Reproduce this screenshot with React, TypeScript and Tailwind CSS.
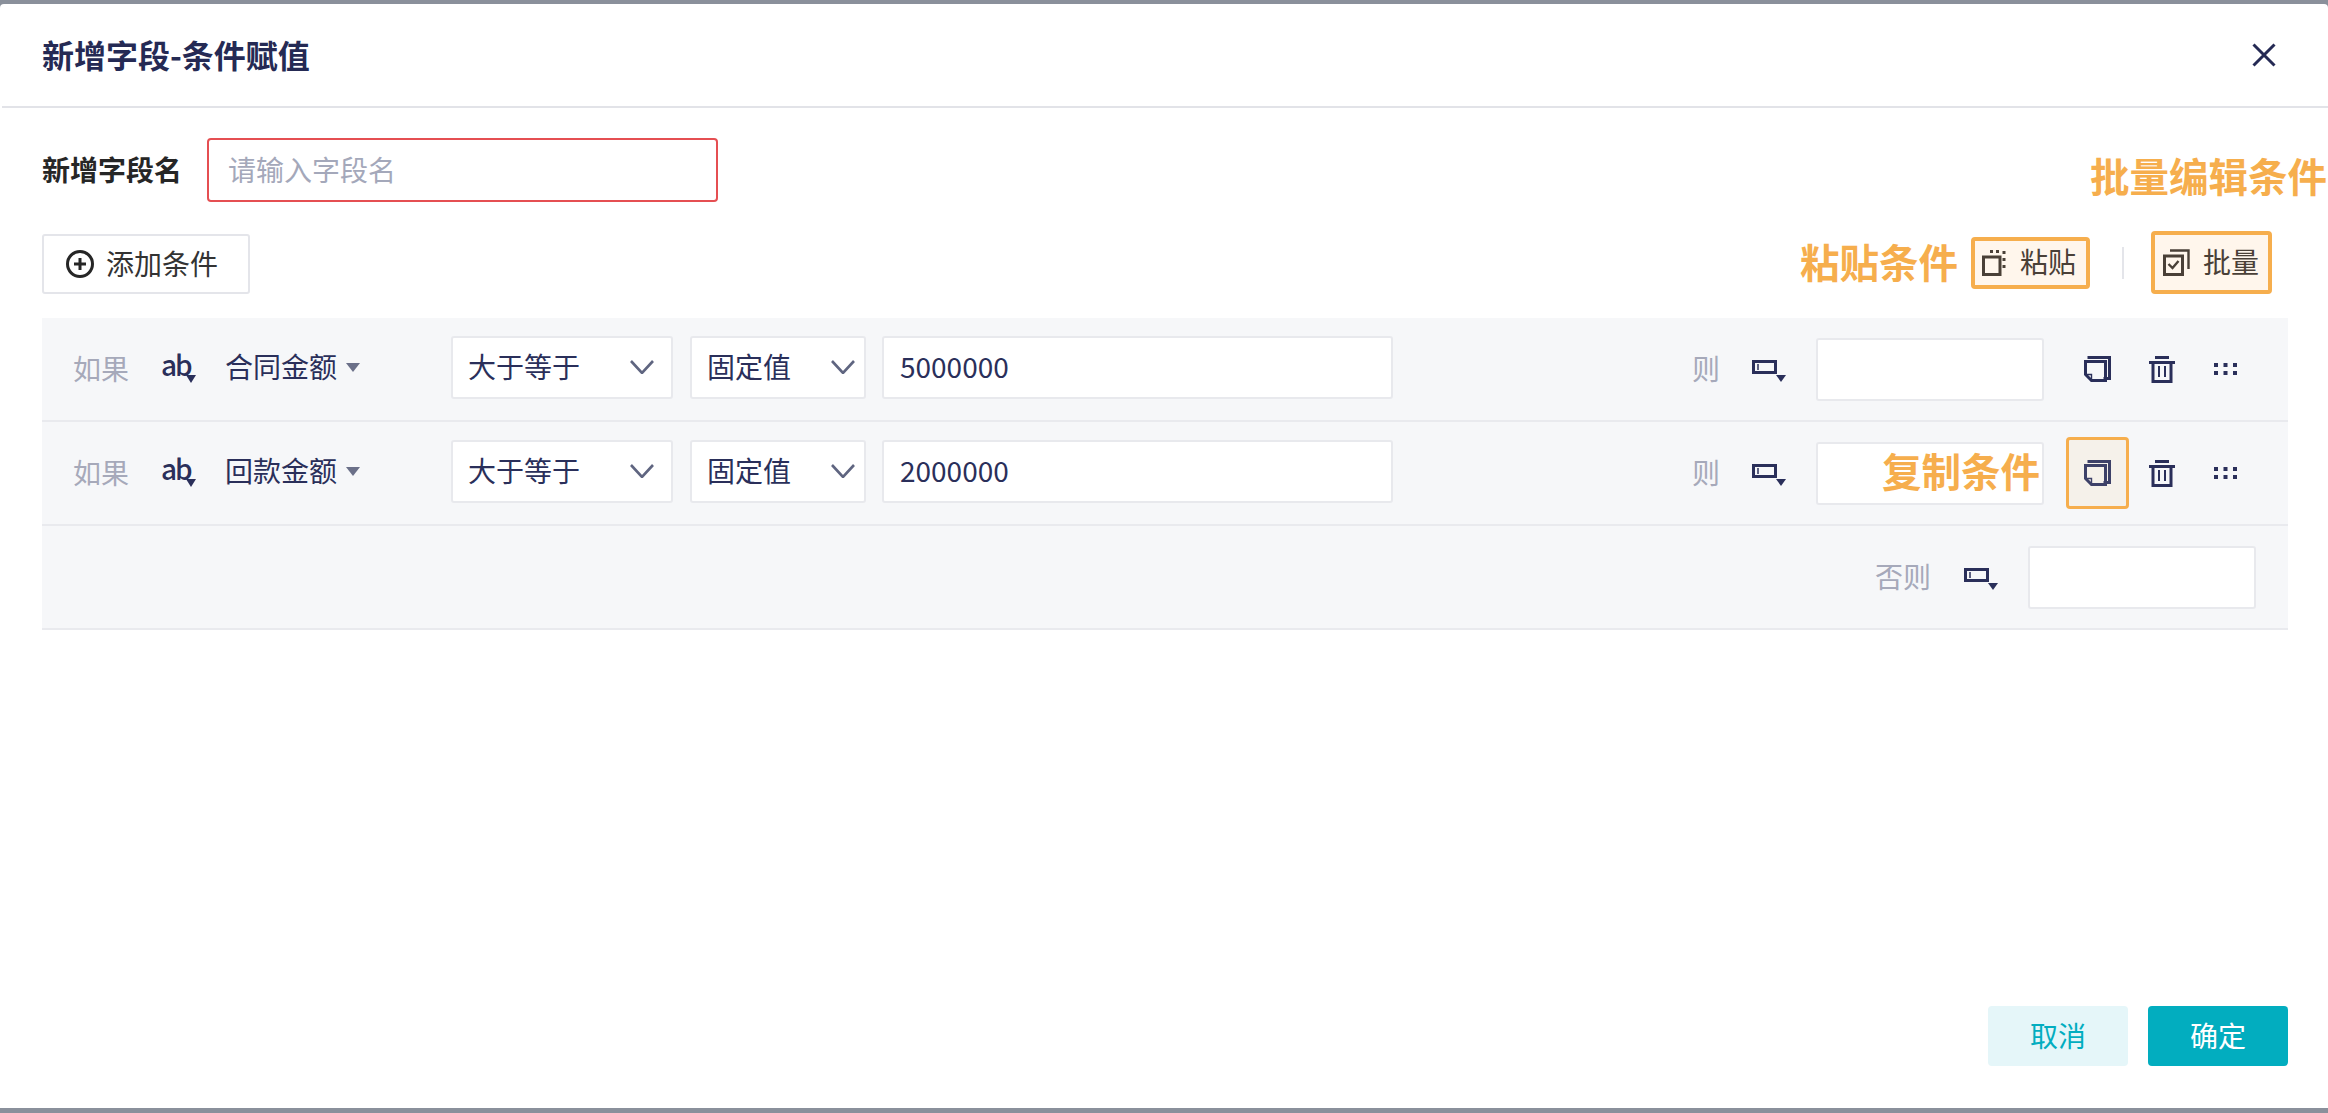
import React from "react";

const CJK = "font-['Noto_Sans_CJK_SC','Liberation_Sans',sans-serif]";

function CopyIcon({ light }: { light?: boolean }) {
  return (
    <svg width="27" height="26" viewBox="0 0 27 26" fill="none" stroke="#2a2f5a" strokeWidth="3" opacity={light ? 0.9 : 1}>
      <path d="M5 1.5h20.5v21H21" strokeLinecap="square" />
      <path d="M1.5 5.5h20v19h-14l-6-6z" />
      <path d="M1.5 18.5h6v6" strokeWidth="1.4" />
    </svg>
  );
}

function TrashIcon() {
  return (
    <svg width="26" height="27" viewBox="0 0 26 27" fill="none" stroke="#2a2f5a">
      <path d="M6 1.5h14" strokeWidth="3" />
      <path d="M0 6.5h26" strokeWidth="3" />
      <path d="M4 7v18.5h18V7" strokeWidth="3" />
      <path d="M10 10v11M16 10v11" strokeWidth="2" />
    </svg>
  );
}

function DotsIcon() {
  return (
    <svg width="24" height="12" viewBox="0 0 24 12" fill="#2a2f5a">
      <rect x="0" y="0" width="4" height="4" />
      <rect x="9.5" y="0" width="4" height="4" />
      <rect x="19" y="0" width="4" height="4" />
      <rect x="0" y="8" width="4" height="4" />
      <rect x="9.5" y="8" width="4" height="4" />
      <rect x="19" y="8" width="4" height="4" />
    </svg>
  );
}

function ValueTypeIcon() {
  return (
    <svg className="mt-[4px]" width="35" height="22" viewBox="0 0 35 22" fill="#2a2f5a">
      <path d="M0 0h25v14H0zM3 3v8h19V3z" fillRule="evenodd" />
      <rect x="5" y="4" width="2" height="6" opacity="0.75" />
      <path d="M24 15h10l-5 7z" />
    </svg>
  );
}

function ChevronIcon() {
  return (
    <svg width="24" height="14" viewBox="0 0 24 14" fill="none" stroke="#5f6580" strokeWidth="2.6">
      <path d="M1 1l11 12L23 1" />
    </svg>
  );
}

function Field({ children, className }: { children?: React.ReactNode; className: string }) {
  return (
    <div className={`flex h-[63px] items-center rounded-[3px] border-2 border-[#e8e9ed] bg-white text-[#2a2f5a] ${className}`}>
      {children}
    </div>
  );
}

function Select({ value, className, gap }: { value: string; className: string; gap: string }) {
  return (
    <Field className={`justify-between pl-[15px] ${gap} ${className}`}>
      <span className="pb-[3px]">{value}</span>
      <ChevronIcon />
    </Field>
  );
}

function ConditionRow({ field, amount, highlight }: { field: string; amount: string; highlight?: boolean }) {
  return (
    <div className="flex h-[104px] items-center border-b-2 border-[#e9eaee] pl-[31px]">
      <span className="w-[56px] pb-[3px] text-[#a6a9ba]">如果</span>
      <div className="relative ml-[31px] h-[40px] w-[36px] text-[#2a2f5a]">
        <span className="absolute left-[1px] top-[-5px] font-medium tracking-[-2px]">ab</span>
        <svg className="absolute right-0 top-[26px]" width="10" height="8" viewBox="0 0 10 8" fill="#2a2f5a">
          <path d="M0 0h10L5 8z" />
        </svg>
      </div>
      <div className="mb-[4px] ml-[29px] flex w-[226px] items-center text-[#2a2f5a]">
        <span className="pb-[2px]">{field}</span>
        <svg className="ml-[9px]" width="14" height="9" viewBox="0 0 14 9" fill="#6b7089">
          <path d="M0 0h14L7 9z" />
        </svg>
      </div>
      <div className="mb-[4px] flex">
        <Select value="大于等于" className="w-[222px]" gap="pr-[17px]" />
        <Select value="固定值" className="ml-[17px] w-[176px]" gap="pr-[9px]" />
        <Field className="ml-[16px] w-[511px] pl-[16px]">
          <span className="pb-[3px]">{amount}</span>
        </Field>
      </div>
      <span className="ml-[299px] w-[28px] pb-[3px] text-[#a6a9ba]">则</span>
      <div className="ml-[32px] flex w-[35px]">
        <ValueTypeIcon />
      </div>
      <div className="relative ml-[29px]">
        <Field className="w-[228px]" />
        {highlight && (
          <span className="absolute right-[4px] top-[5px] text-[39.5px] leading-[46px] font-bold text-[#f6ae4d]">复制条件</span>
        )}
      </div>
      <div
        className={`ml-[22px] flex h-[72px] w-[63px] items-center justify-center rounded-[4px] border-[3px] ${
          highlight ? "border-[#f6ae4d] bg-[#f5f1ea]" : "border-transparent"
        }`}
      >
        <CopyIcon light={highlight} />
      </div>
      <div className="ml-[20px] flex w-[26px]">
        <TrashIcon />
      </div>
      <div className="ml-[39px] flex w-[24px]">
        <DotsIcon />
      </div>
    </div>
  );
}

export default function App() {
  return (
    <div className={`flex h-[1113px] w-[2328px] flex-col overflow-hidden bg-[#8a909b] pt-[4px] pb-[5px] text-[28px] leading-[40px] ${CJK}`}>
      <div className="relative flex flex-1 flex-col rounded-t-[4px] bg-white">
        {/* Header */}
        <div className="ml-[2px] flex h-[104px] items-center justify-between border-b-2 border-[#e2e3e8] pr-[52px] pl-[40px]">
          <h1 className="pb-[2px] text-[32px] leading-[44px] font-bold text-[#252a54]">新增字段-条件赋值</h1>
          <svg width="24" height="24" viewBox="0 0 24 24" fill="none" stroke="#252a54" strokeWidth="3">
            <path d="M1.5 1.5l21 21M22.5 1.5l-21 21" />
          </svg>
        </div>

        {/* annotation above the batch button */}
        <span className="absolute top-[148px] right-[1px] text-[39.5px] leading-[46px] font-bold whitespace-nowrap text-[#f6ae4d]">
          批量编辑条件
        </span>

        <div className="flex-1 pt-[30px] pr-[40px] pl-[42px]">
          <div className="flex items-center">
            <label className="w-[165px] pb-[2px] font-bold text-[#262626]">新增字段名</label>
            <div className="flex h-[64px] w-[511px] items-center rounded-[4px] border-2 border-[#e54f52] pb-[3px] pl-[19px] text-[#a4a8ba]">
              请输入字段名
            </div>
          </div>

          <div className="mt-[32px] flex items-start justify-between">
            <button className="flex h-[60px] w-[208px] items-center rounded-[3px] border-2 border-[#e4e5ea] bg-white pl-[22px] text-[#333]">
              <svg width="28" height="28" viewBox="0 0 28 28" fill="none" stroke="#262626" strokeWidth="3">
                <circle cx="14" cy="14" r="12.5" />
                <path d="M14 8v12M8 14h12" />
              </svg>
              <span className="ml-[12px] pb-[3px]">添加条件</span>
            </button>

            <div className="-mt-[3px] mr-[16px] flex items-center text-[#4a4037]">
              <span className="pb-[3px] text-[39.5px] leading-[46px] font-bold text-[#f6ae4d]">粘贴条件</span>
              <div className="ml-[13px] flex h-[52px] w-[119px] items-center rounded-[4px] border-4 border-[#f6ae4d] bg-[#fff6ec] pl-[7px]">
                <svg width="25" height="26" viewBox="0 0 25 26" fill="none" stroke="#4a4037">
                  <path d="M1.5 7h16.5v17.5H1.5z" strokeWidth="3" />
                  <path d="M8 1.5h3M14 1.5h3M22 1v3M22 8v3M22 15v3" strokeWidth="3" />
                </svg>
                <span className="ml-[13px] pb-[3px]">粘贴</span>
              </div>
              <div className="ml-[32px] h-[32px] w-[2px] bg-[#e4e5ea]" />
              <div className="ml-[27px] flex h-[63px] w-[121px] items-center rounded-[4px] border-4 border-[#f6ae4d] bg-[#fff6ec] pl-[8px]">
                <svg width="27" height="27" viewBox="0 0 27 27" fill="none" stroke="#4a4037">
                  <path d="M1.5 7h18v18.5h-18z" strokeWidth="3" />
                  <path d="M7 1.5h18.5V20" strokeWidth="2.4" />
                  <path d="M5.5 15l4 4 6-7" strokeWidth="2.4" />
                </svg>
                <span className="ml-[13px] pb-[3px]">批量</span>
              </div>
            </div>
          </div>

          {/* Condition table */}
          <div className="mt-[24px] bg-[#f6f7f9]">
            <ConditionRow field="合同金额" amount="5000000" />
            <ConditionRow field="回款金额" amount="2000000" highlight />
            <div className="flex h-[104px] items-center justify-end border-b-2 border-[#e9eaee] pr-[32px]">
              <span className="pb-[3px] text-[#a6a9ba]">否则</span>
              <div className="ml-[33px] flex w-[35px]">
                <ValueTypeIcon />
              </div>
              <Field className="ml-[29px] w-[228px]" />
            </div>
          </div>
        </div>

        {/* Footer */}
        <div className="flex justify-end gap-[20px] pr-[40px] pb-[42px]">
          <button className="h-[60px] w-[140px] rounded-[4px] bg-[#e5f6f9] pb-[3px] text-[#02adc0]">取消</button>
          <button className="h-[60px] w-[140px] rounded-[4px] bg-[#02adbf] pb-[3px] text-white">确定</button>
        </div>
      </div>
    </div>
  );
}
